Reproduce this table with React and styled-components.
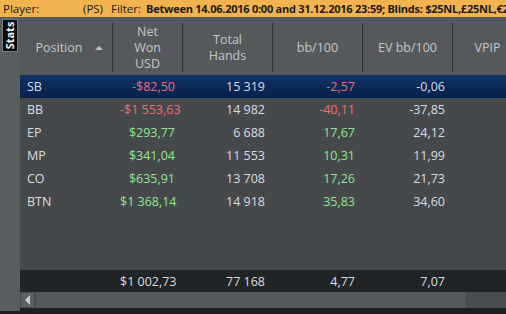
import React from 'react';
import styled, { createGlobalStyle } from 'styled-components';

const GlobalStyle = createGlobalStyle`
  html, body {
    margin: 0;
    padding: 0;
    background: #1e1f21;
  }
  body {
    font-family: 'Open Sans', 'Noto Sans', sans-serif;
    font-size: 12px;
  }
`;

const COLS = '93px 70px 90px 90px 90px 70px';

const Screen = styled.div`
  width: 506px;
  height: 314px;
  overflow: hidden;
  display: flex;
  flex-direction: column;
  background: #1e1f21;
`;

const FilterBar = styled.div`
  height: 17px;
  flex-shrink: 0;
  display: flex;
  align-items: center;
  background: #f2b24f;
  color: #1b1b1b;
  white-space: nowrap;
  padding-left: 3px;
  font-size: 11.5px;
  overflow: hidden;
`;

const Label = styled.span`
  flex-shrink: 0;
  width: ${(p) => (p.$width ? `${p.$width}px` : 'auto')};
  margin-right: ${(p) => p.$gap || 0}px;
`;

const Bold = styled.span`
  font-weight: 700;
  font-size: 11px;
  letter-spacing: -0.25px;
`;

const Main = styled.div`
  display: flex;
  height: 294px;
`;

const Sidebar = styled.div`
  width: 20px;
  flex-shrink: 0;
  background: #5a5d60;
  padding-top: 2px;
  box-sizing: border-box;
`;

const StatsTab = styled.div`
  margin-left: 2px;
  width: 16px;
  height: 33px;
  box-sizing: border-box;
  background: #0b0b0b;
  border: 1px solid #7a7d80;
  display: flex;
  align-items: center;
  justify-content: center;
`;

const StatsLabel = styled.span`
  transform: rotate(-90deg);
  color: #f4f4f4;
  font-weight: 700;
  font-size: 11px;
  white-space: nowrap;
`;

const Table = styled.div`
  flex: 1;
  min-width: 0;
  display: flex;
  flex-direction: column;
  background: #46494c;
  overflow: hidden;
`;

const HeaderRow = styled.div`
  display: grid;
  grid-template-columns: ${COLS};
  height: 58px;
  flex-shrink: 0;
  background: #56595c;
`;

const HeadCell = styled.div`
  margin: 6px 0 3px;
  border-right: 1px solid #2f3235;
  display: flex;
  align-items: center;
  justify-content: center;
  text-align: center;
  color: #c3c7cb;
  line-height: 16px;
  font-size: 12.5px;
  padding-right: ${(p) => (p.$sort ? 14 : 0)}px;
  position: relative;
`;

const SortArrow = styled.span`
  position: absolute;
  right: 9px;
  top: 50%;
  margin-top: -2px;
  width: 0;
  height: 0;
  border-left: 4px solid transparent;
  border-right: 4px solid transparent;
  border-bottom: 4px solid #c3c7cb;
`;

const Body = styled.div`
  flex: 1;
  display: flex;
  flex-direction: column;
`;

const Row = styled.div`
  display: grid;
  grid-template-columns: ${COLS};
  height: 23px;
  align-items: center;
  background: ${(p) =>
    p.$selected ? 'linear-gradient(#0f3367, #06214b)' : 'transparent'};
`;

const Cell = styled.div`
  padding: 0 8px 0 7px;
  text-align: ${(p) => (p.$left ? 'left' : 'right')};
  white-space: nowrap;
  font-size: 12.5px;
  color: ${(p) =>
    p.$tone === 'neg' ? '#f26c6c' : p.$tone === 'pos' ? '#8fe68f' : '#d9dde2'};
`;

const TotalRow = styled(Row)`
  height: 22px;
  background: #212427;
  flex-shrink: 0;
`;

const ScrollBar = styled.div`
  height: 16px;
  flex-shrink: 0;
  display: flex;
  background: #4a4d50;
  border-bottom: 3px solid #1e1f21;
`;

const ScrollButton = styled.div`
  width: 15px;
  box-sizing: border-box;
  border: 1px solid #4a4d50;
  background: #5c5f62;
  display: flex;
  align-items: center;
  justify-content: center;
`;

const LeftArrow = styled.span`
  width: 0;
  height: 0;
  border-top: 5px solid transparent;
  border-bottom: 5px solid transparent;
  border-right: 5px solid #c8ccd0;
`;

const Thumb = styled.div`
  width: 430px;
  margin-left: 1px;
  background: #56595c;
`;

const rows = [
  ['SB', '-$82,50', 'neg', '15 319', '-2,57', 'neg', '-0,06'],
  ['BB', '-$1 553,63', 'neg', '14 982', '-40,11', 'neg', '-37,85'],
  ['EP', '$293,77', 'pos', '6 688', '17,67', 'pos', '24,12'],
  ['MP', '$341,04', 'pos', '11 553', '10,31', 'pos', '11,99'],
  ['CO', '$635,91', 'pos', '13 708', '17,26', 'pos', '21,73'],
  ['BTN', '$1 368,14', 'pos', '14 918', '35,83', 'pos', '34,60'],
];

const App = () => (
  <>
    <GlobalStyle />
    <Screen>
      <FilterBar>
        <Label $width={80}>Player:</Label>
        <Label $gap={8}>(PS)</Label>
        <Label $gap={5}>Filter:</Label>
        <Bold>Between 14.06.2016 0:00 and 31.12.2016 23:59; Blinds: $25NL,£25NL,€25NL</Bold>
      </FilterBar>
      <Main>
        <Sidebar>
          <StatsTab>
            <StatsLabel>Stats</StatsLabel>
          </StatsTab>
        </Sidebar>
        <Table>
          <HeaderRow>
            <HeadCell $sort>
              Position
              <SortArrow />
            </HeadCell>
            <HeadCell>
              Net
              <br />
              Won
              <br />
              USD
            </HeadCell>
            <HeadCell>
              Total
              <br />
              Hands
            </HeadCell>
            <HeadCell>bb/100</HeadCell>
            <HeadCell>EV bb/100</HeadCell>
            <HeadCell>VPIP</HeadCell>
          </HeaderRow>
          <Body>
            {rows.map(([pos, net, netTone, hands, bb, bbTone, ev], i) => (
              <Row key={pos} $selected={i === 0}>
                <Cell $left>{pos}</Cell>
                <Cell $tone={netTone}>{net}</Cell>
                <Cell>{hands}</Cell>
                <Cell $tone={bbTone}>{bb}</Cell>
                <Cell>{ev}</Cell>
                <Cell />
              </Row>
            ))}
          </Body>
          <TotalRow>
            <Cell />
            <Cell>$1 002,73</Cell>
            <Cell>77 168</Cell>
            <Cell>4,77</Cell>
            <Cell>7,07</Cell>
            <Cell />
          </TotalRow>
          <ScrollBar>
            <ScrollButton>
              <LeftArrow />
            </ScrollButton>
            <Thumb />
          </ScrollBar>
        </Table>
      </Main>
    </Screen>
  </>
);

export default App;
